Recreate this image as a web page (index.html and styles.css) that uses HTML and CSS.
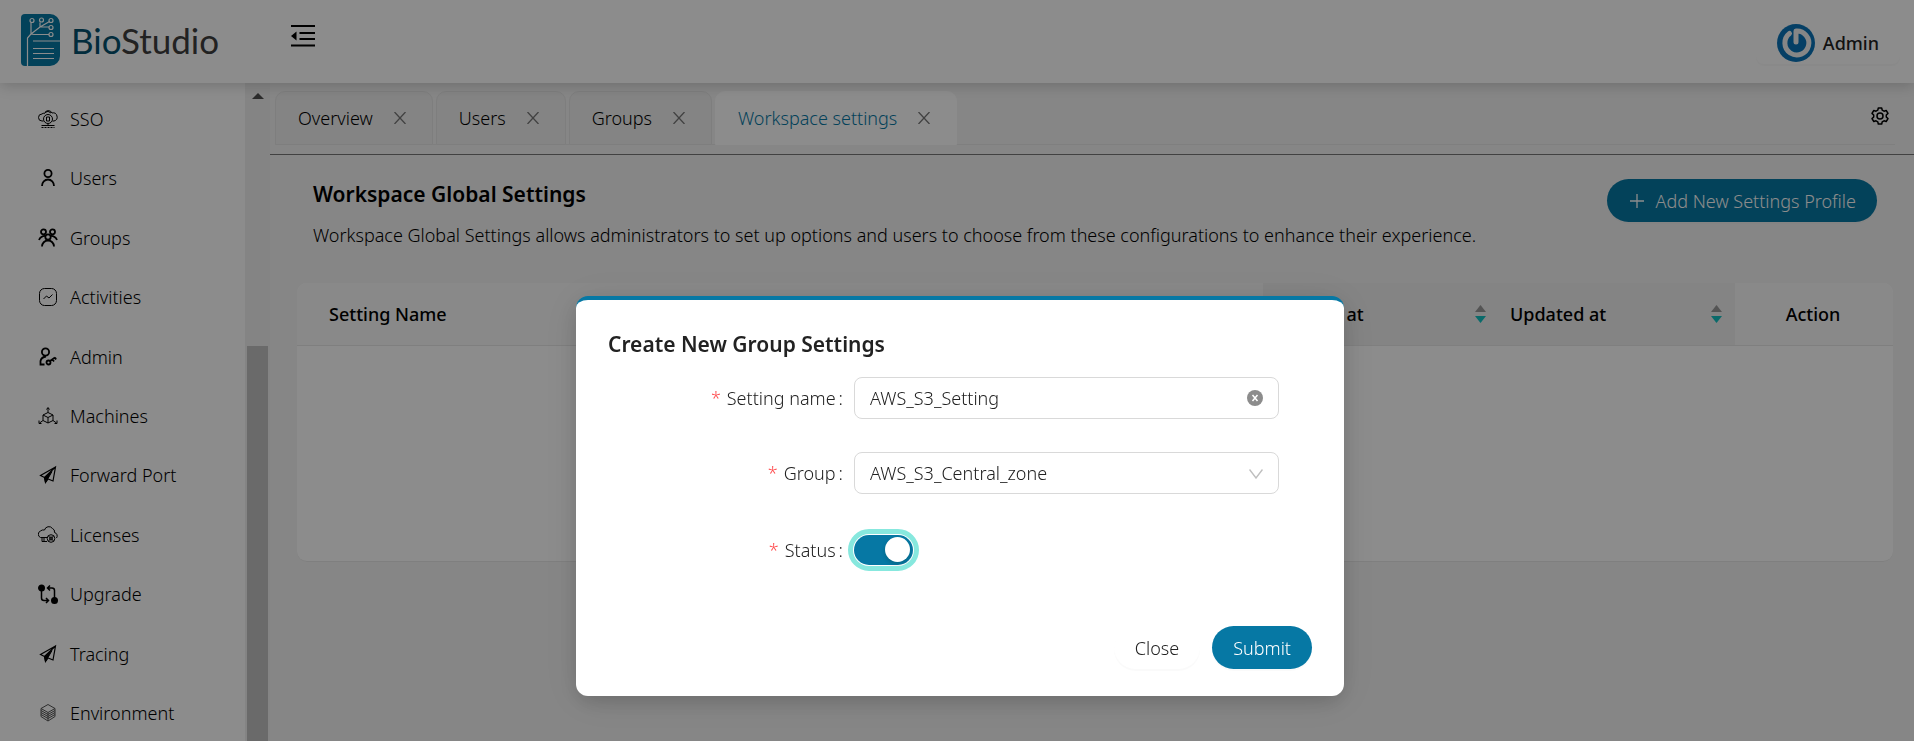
FILE: index.html
```html
<!DOCTYPE html>
<html lang="en">
<head>
<meta charset="utf-8">
<title>BioStudio</title>
<link rel="stylesheet" href="styles.css">
</head>
<body>
<div class="app">
  <header class="header">
    <a class="brand" href="#">
      <svg class="brand-mark" viewBox="0 0 39 52" fill="none" stroke="#fff" stroke-width="1.2">
        <path d="M4 0H29a10 10 0 0 1 10 10V42a10 10 0 0 1-10 10H4a4 4 0 0 1-4-4V4a4 4 0 0 1 4-4z" fill="#0678a4" stroke="none"/>
        <path d="M6.500 52V24L10 20V9M10 20L19 13L28.500 7.500M19 13V8.500M19 13H28M10 20L13 20.500H28M12 27H39M12 34.500H33M12 39.500H33M12 44.500H33"/>
        <g fill="#0678a4"><circle cx="11" cy="6.500" r="2"/><circle cx="20.500" cy="6" r="2"/><circle cx="30" cy="6.500" r="2"/><circle cx="30" cy="13.500" r="2"/><circle cx="30" cy="20.500" r="2"/></g>
      </svg>
      <span class="brand-name"><span class="brand-bio">Bio</span>Studio</span>
    </a>
    <button class="icon-button fold" aria-label="Collapse menu">
      <svg width="24" height="22" viewBox="0 0 24 22" fill="none" stroke="#000" stroke-width="2"><path d="M0 1H24M8.500 8H24M8.500 14H24M0 20.500H24"/><path d="M5.500 6.500V15.500L0 11z" fill="#000" stroke="none"/></svg>
    </button>
    <button class="account">
      <svg width="38" height="38" viewBox="0 0 38 38"><circle cx="19" cy="19" r="19" fill="#0a74b9"/><path d="M12.500 9.500A12 12 0 1 0 19 7V18" fill="none" stroke="#f4f4f4" stroke-width="5" stroke-linecap="round" stroke-linejoin="round"/></svg>
      <span>Admin</span>
    </button>
  </header>
  <div class="body">
    <nav class="sidebar">
      <ul class="menu">
        <li><a href="#"><svg class="ico" viewBox="0 0 20 20"><path d="M5.500 12H4a3.500 3.500 0 0 1 0-7 2 2 0 0 1 2.500-.5A4 4 0 0 1 14 4a4 4 0 0 1 2 8H14.500M7 3.500Q10 1 13 4M3.500 16.500H16.500M10 14.500v2"/><path d="M3.500 18.500H16.500" stroke-dasharray="2 1"/><circle cx="10" cy="10" r="4.500"/><path d="M8.500 8h3v4h-3z"/></svg>SSO</a></li>
        <li><a href="#"><svg class="ico bold" viewBox="0 0 20 20"><circle cx="10" cy="5.500" r="3.600"/><path d="M4 18A6 6.500 0 0 1 16 18"/></svg>Users</a></li>
        <li><a href="#"><svg class="ico bold" viewBox="0 0 20 20"><circle cx="5.500" cy="3.800" r="2.500"/><circle cx="14.500" cy="3.800" r="2.500"/><circle cx="10" cy="9" r="2.700"/><path d="M1 12Q3 7.500 8 8M19 12Q17 7.500 12 8M4 18.500a6 6 0 0 1 12 0"/></svg>Groups</a></li>
        <li><a href="#"><svg class="ico" viewBox="0 0 20 20"><rect x="1.500" y="1.500" width="17" height="17" rx="5"/><path d="M5.500 12L8.500 9L11 11L14.500 7.500"/></svg>Activities</a></li>
        <li><a href="#"><svg class="ico bold" viewBox="0 0 20 20"><circle cx="7.500" cy="5" r="3.600"/><path d="M6.500 17.500H2.500V14Q3.500 10 8 9.500"/><circle cx="10.500" cy="15.500" r="2"/><path d="M12 14L17 10.500M14.500 12.500L16 14.500M17 10.500L18 12.500"/></svg>Admin</a></li>
        <li><a href="#"><svg class="ico" viewBox="0 0 20 20"><path d="M10 6.500L15 9V14.500L10 17L5 14.500V9zM5 9L10 11.500L15 9M10 11.500V17M10 6.500V2M5 14.500L1.500 17M15 14.500L18.500 17M8.500 3.500L10 1.500L11.500 3.500M1 14.500V17.500H3.500M19 14.500V17.500H16.500"/></svg>Machines</a></li>
        <li><a href="#"><svg class="ico" viewBox="0 0 20 20"><path d="M17.500 2L2.500 10.500L6.500 12.500L15 16zM17.500 2L6.500 12.500L7.500 17.500L10 14" stroke-width="1.200"/><path d="M6.500 12.500L14 6.500L10 13.500L7.500 17.500z" fill="#000"/></svg>Forward Port</a></li>
        <li><a href="#"><svg class="ico" viewBox="0 0 20 20"><path d="M9 12.500H2.500A3.500 3.500 0 0 1 2.500 6Q4 4.500 6.500 5A4.500 4.500 0 0 1 14.500 3.500Q17 4.500 16.500 7.500A3.500 3.500 0 0 1 18.500 13M4 13V16.500H9M6 13V16.500"/><circle cx="13" cy="13.500" r="3.800"/><circle cx="13" cy="13.500" r="1.500"/><path d="M10.500 11L15.500 16M15.500 11L10.500 16"/></svg>Licenses</a></li>
        <li><a href="#"><svg class="ico bold" viewBox="0 0 20 20"><circle cx="3.500" cy="4" r="2.600" fill="#000"/><circle cx="16.500" cy="16.500" r="2.600" fill="#000"/><path stroke-width="1.500" d="M3.500 6V14Q3.500 16.500 6 16.500H10M8 14L10.500 16.500L8 19M16.500 14V6.500Q16.500 4 14 4H10M12 1.500L9.500 4L12 6.500"/></svg>Upgrade</a></li>
        <li><a href="#"><svg class="ico" viewBox="0 0 20 20"><path d="M17.500 2L2.500 10.500L6.500 12.500L15 16zM17.500 2L6.500 12.500L7.500 17.500L10 14" stroke-width="1.200"/><path d="M6.500 12.500L14 6.500L10 13.500L7.500 17.500z" fill="#000"/></svg>Tracing</a></li>
        <li><a href="#"><svg class="ico faint" viewBox="0 0 20 20"><path d="M10 1.500L17 5.500V13.500L10 18L3 13.500V5.500zM3 5.500L10 9.500L17 5.500M10 9.500V18"/><path d="M3 7.500L10 11.500L17 7.500M3 9.500L10 13.500L17 9.500M3 11.500L10 15.500L17 11.500"/></svg>Environment</a></li>
      </ul>
      <div class="scrollbar"><span class="scroll-up"></span><span class="scroll-thumb"></span></div>
    </nav>
    <main class="main">
      <div class="tabbar">
        <div class="tabs">
          <div class="tab"><a href="#">Overview</a><button class="icon-button" aria-label="Close Overview"><svg class="x" viewBox="0 0 12 12"><path d="M.5 0L11.500 12M11.500 0L.5 12"/></svg></button></div>
          <div class="tab"><a href="#">Users</a><button class="icon-button" aria-label="Close Users"><svg class="x" viewBox="0 0 12 12"><path d="M.5 0L11.500 12M11.500 0L.5 12"/></svg></button></div>
          <div class="tab"><a href="#">Groups</a><button class="icon-button" aria-label="Close Groups"><svg class="x" viewBox="0 0 12 12"><path d="M.5 0L11.500 12M11.500 0L.5 12"/></svg></button></div>
          <div class="tab active"><a href="#">Workspace settings</a><button class="icon-button" aria-label="Close Workspace settings"><svg class="x" viewBox="0 0 12 12"><path d="M.5 0L11.500 12M11.500 0L.5 12"/></svg></button></div>
        </div>
        <button class="icon-button gear" aria-label="Tab settings">
          <svg width="18" height="18" viewBox="0 0 18 18" fill="none" stroke="#000" stroke-width="1.500" stroke-linejoin="round"><path d="M7.300 1H10.700L11.200 3.200L13 4.200L15.200 3.500L17 6.400L15.300 8V10L17 11.600L15.200 14.500L13 13.800L11.200 14.800L10.700 17H7.300L6.800 14.800L5 13.800L2.800 14.500L1 11.600L2.700 10V8L1 6.400L2.800 3.500L5 4.200L6.800 3.200z"/><circle cx="9" cy="9" r="3"/></svg>
        </button>
      </div>
      <section class="page">
        <div class="page-head">
          <div>
            <h1>Workspace Global Settings</h1>
            <p>Workspace Global Settings allows administrators to set up options and users to choose from these configurations to enhance their experience.</p>
          </div>
          <button class="pill primary add"><svg width="14" height="14" viewBox="0 0 14 14" stroke="#fff" stroke-width="1.300"><path d="M7 0V14M0 7H14"/></svg>Add New Settings Profile</button>
        </div>
        <table class="grid">
          <thead>
            <tr>
              <th class="col-name">Setting Name</th>
              <th class="col-date"><div class="sorter">Created at<svg width="11" height="18" viewBox="0 0 11 18"><path d="M0 7L5.500 0L11 7z" fill="#999"/><path d="M0 11H11L5.500 18z" fill="#13c2c2"/></svg></div></th>
              <th class="col-date"><div class="sorter">Updated at<svg width="11" height="18" viewBox="0 0 11 18"><path d="M0 7L5.500 0L11 7z" fill="#999"/><path d="M0 11H11L5.500 18z" fill="#13c2c2"/></svg></div></th>
              <th class="col-action">Action</th>
            </tr>
          </thead>
          <tbody><tr><td colspan="4"></td></tr></tbody>
        </table>
      </section>
    </main>
  </div>
</div>
<div class="mask">
  <div class="modal" role="dialog" aria-modal="true" aria-labelledby="modal-title">
    <h2 id="modal-title">Create New Group Settings</h2>
    <form class="form">
      <div class="row">
        <label for="name"><span class="req">*</span>Setting name<span class="colon">:</span></label>
        <div class="field"><input id="name" class="control" type="text" value="AWS_S3_Setting">
          <button type="button" class="icon-button field-icon" aria-label="Clear"><svg width="16" height="16" viewBox="0 0 16 16"><circle cx="8" cy="8" r="8" fill="#8c8c8c"/><path d="M5.500 5L10.500 11M10.500 5L5.500 11" stroke="#fff" stroke-width="1.500"/></svg></button>
        </div>
      </div>
      <div class="row">
        <label for="group"><span class="req">*</span>Group<span class="colon">:</span></label>
        <div class="field"><select id="group" class="control"><option>AWS_S3_Central_zone</option></select>
          <svg class="field-icon arrow" width="14" height="10" viewBox="0 0 14 10" fill="none" stroke="#bfbfbf" stroke-width="1.400"><path d="M.5 .5L7 9L13.500 .5"/></svg>
        </div>
      </div>
      <div class="row status">
        <label for="status"><span class="req">*</span>Status<span class="colon">:</span></label>
        <input id="status" class="switch" type="checkbox" role="switch" checked>
      </div>
      <div class="actions">
        <button type="button" class="pill plain">Close</button>
        <button type="button" class="pill primary">Submit</button>
      </div>
    </form>
  </div>
</div>
</body>
</html>
```
FILE: styles.css
```css
* { box-sizing: border-box; }
body {
  margin: 0;
  font: 350 18px/28px "Noto Sans", "Open Sans", sans-serif;
  color: #000;
  background: #f5f5f5;
}
a { color: inherit; text-decoration: none; }
button, input, select { font: inherit; color: inherit; }
svg { display: block; flex: none; }
.icon-button { border: 0; padding: 0; background: none; }

.app { height: 100vh; display: flex; flex-direction: column; overflow: hidden; }
.header {
  flex: none;
  display: flex;
  align-items: flex-start;
  height: 83px;
  padding: 14px 14px 0 21px;
  background: #fff;
  box-shadow: 0 2px 14px rgba(0, 0, 0, .2);
  z-index: 1;
}
.brand { display: flex; align-items: center; gap: 11px; width: 270px; }
.brand-mark { width: 39px; height: 52px; }
.brand-name { font: 400 35px/40px Lato, sans-serif; color: #3f3f3f; }
.brand-bio { color: #04506e; }
.fold { margin-top: 11px; }
.account {
  display: flex;
  align-items: center;
  gap: 8px;
  margin: 6px 0 0 auto;
  padding: 4px 21px 2px;
  border: 0;
  border-radius: 8px;
  background: #fff;
  box-shadow: 0 2px 0 rgba(0, 0, 0, .02);
  font-weight: 500;
  line-height: 26px;
  color: #222;
}

.body { flex: 1; display: flex; min-height: 0; }
.sidebar { flex: none; width: 270px; display: flex; background: #fff; }
.menu {
  flex: 1;
  display: flex;
  flex-direction: column;
  margin: 0 0 -2px;
  padding: 6px 0 0 38px;
  list-style: none;
}
.menu li { flex: 1 0 59px; display: flex; align-items: center; }
.menu a { display: flex; align-items: center; gap: 12px; }
.ico { width: 20px; height: 20px; fill: none; stroke: #000; stroke-width: 1; }
.ico.bold { stroke-width: 1.8; }
.ico.faint { stroke: #555; }
.scrollbar { width: 25px; padding: 10px 2px 0; background: #f1f1f1; display: flex; flex-direction: column; }
.scroll-up { align-self: center; border: 6px solid transparent; border-top: 0; border-bottom-color: #505050; }
.scroll-thumb { flex: 1; margin-top: 247px; background: #c1c1c1; }

.main { flex: 1; min-width: 0; }
.tabbar {
  display: flex;
  padding: 8px 25px 9px 5px;
  border-bottom: 1px solid #777;
}
.tabs { flex: 1; display: flex; gap: 3px; margin-right: -24px; border-bottom: 1px solid #e8e8e8; }
.tab {
  display: flex;
  align-items: center;
  gap: 21px;
  height: 54px;
  margin-bottom: -1px;
  padding: 0 26px 0 22px;
  border: 1px solid #e6e6e6;
  border-radius: 10px 10px 0 0;
  background: #f0f0f0;
}
.tab.active { background: #fff; border-color: #fff; color: #0678a4; }
.x { width: 12px; height: 12px; stroke: #777; stroke-width: 1.300; fill: none; }
.gear { align-self: center; margin-top: -4px; }

.page { padding: 24px 21px 0 27px; }
.page-head { display: flex; justify-content: space-between; align-items: flex-start; padding: 0 16px; }
h1 { margin: 1px 0 13px; font-size: 21px; line-height: 28px; font-weight: 600; }
p { margin: 0; }
.pill {
  display: flex;
  align-items: center;
  height: 43px;
  padding: 0 21px;
  border: 0;
  border-radius: 22px;
}
.primary { background: #0678a4; color: #fff; box-shadow: 0 2px 0 rgba(0, 0, 0, .02); }
.plain { background: #fff; color: #222; box-shadow: 0 2px 0 rgba(0, 0, 0, .02); }
.add { flex: none; gap: 12px; padding: 0 21px 0 23px; }

.grid {
  width: 100%;
  margin-top: 34px;
  table-layout: fixed;
  border-collapse: separate;
  border-spacing: 0;
  background: #fff;
  border-radius: 10px;
  border-bottom: 1px solid #e8e8e8;
}
.grid th { height: 63px; padding: 0 13px 0 11px; text-align: left; font-weight: 500; background: #fafafa; border-bottom: 1px solid #e8e8e8; }
.grid td { height: 215px; padding: 0; }
.grid .col-name { padding-left: 32px; border-top-left-radius: 10px; }
.grid .col-date { width: 236px; background: #f0f0f0; }
.grid .col-action { width: 158px; text-align: center; border-top-right-radius: 10px; }
.sorter { display: flex; align-items: center; justify-content: space-between; }

.mask {
  position: fixed;
  inset: 0;
  z-index: 10;
  display: flex;
  justify-content: center;
  align-items: flex-start;
  padding: 296px 0 0 6px;
  background: rgba(0, 0, 0, .45);
}
.modal {
  width: 768px;
  max-width: 100%;
  padding: 30px 32px 27px;
  border-top: 4px solid #0678a4;
  border-radius: 12px;
  background: #fff;
  color: #222;
  box-shadow: 0 8px 20px rgba(0, 0, 0, .12), 0 4px 40px rgba(0, 0, 0, .1);
}
h2 { margin: 0 0 19px; font-size: 21px; line-height: 28px; font-weight: 600; }
.row { display: grid; grid-template-columns: 246px 1fr; align-items: center; margin: 0 33px 33px 0; }
.row label { display: flex; justify-content: flex-end; padding-right: 11px; }
.req { margin-right: 6px; color: #ff4d4f; }
.colon { margin-left: 3px; }
.field { position: relative; }
.control {
  display: block;
  width: 100%;
  height: 42px;
  padding: 0 44px 0 15px;
  border: 1px solid #d9d9d9;
  border-radius: 8px;
  background: #fff;
  appearance: none;
}
.field-icon { position: absolute; right: 16px; top: 13px; }
.field-icon.arrow { top: 17px; }
.status { height: 46px; margin-bottom: 53px; }
.switch {
  appearance: none;
  display: flex;
  justify-content: flex-end;
  width: 59px;
  height: 30px;
  margin: 0;
  padding: 2px 3px;
  border-radius: 15px;
  background: #0678a4;
  outline: 5px solid #87e8de;
  outline-offset: 1px;
}
.switch::before { content: ""; width: 25px; height: 25px; border-radius: 50%; background: #fff; box-shadow: 0 2px 4px rgba(0, 35, 11, .2); }
.actions { display: flex; justify-content: flex-end; gap: 12px; }
```
